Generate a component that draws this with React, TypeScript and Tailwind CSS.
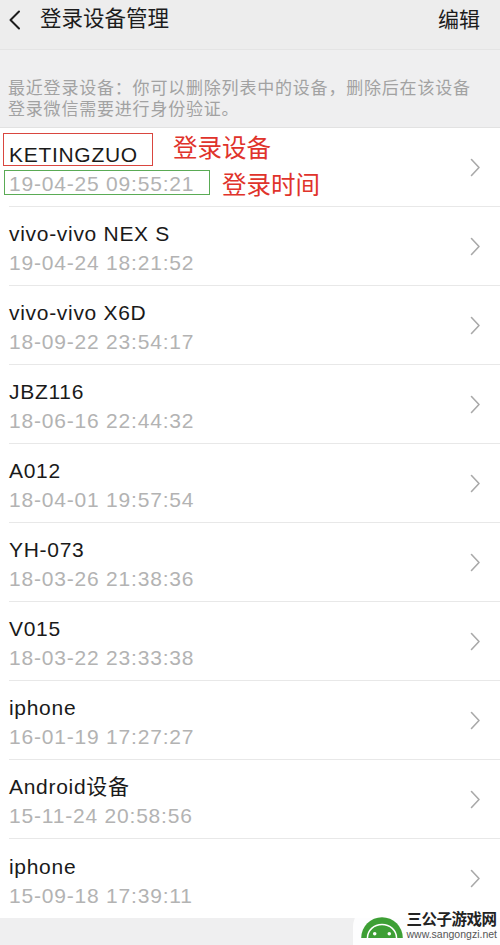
import React from 'react';

const DEVICES = [
  { name: 'KETINGZUO', time: '19-04-25 09:55:21' },
  { name: 'vivo-vivo NEX S', time: '19-04-24 18:21:52' },
  { name: 'vivo-vivo X6D', time: '18-09-22 23:54:17' },
  { name: 'JBZ116', time: '18-06-16 22:44:32' },
  { name: 'A012', time: '18-04-01 19:57:54' },
  { name: 'YH-073', time: '18-03-26 21:38:36' },
  { name: 'V015', time: '18-03-22 23:33:38' },
  { name: 'iphone', time: '16-01-19 17:27:27' },
  { name: 'Android设备', time: '15-11-24 20:58:56' },
  { name: 'iphone', time: '15-09-18 17:39:11' },
];

const FONT = "font-['Liberation_Sans','Noto_Sans_CJK_SC',sans-serif]";

const Chevron = () => (
  <svg width="11" height="19" viewBox="0 0 11 19" fill="none">
    <path d="M1.5 1.5 L9 9.5 L1.5 17.5" stroke="#a9a9a9" strokeWidth="1.6" strokeLinecap="round" strokeLinejoin="round" />
  </svg>
);

const Logo = () => (
  <svg width="42" height="26" viewBox="0 0 40 25">
    <path d="M0 24 A20 20 0 0 1 40 24 Z" fill="#3d9f35" />
    <path d="M6 24 A14 13 0 0 1 34 24" stroke="#fff" strokeWidth="1.4" fill="none" />
    <circle cx="13" cy="20" r="1.7" fill="#fff" />
    <circle cx="27" cy="20" r="1.7" fill="#fff" />
  </svg>
);

export default function App() {
  return (
    <div className={`relative w-[500px] h-[945px] overflow-hidden bg-[#efeff0] ${FONT}`}>
      {/* header */}
      <div className="flex items-center h-[50px] bg-[#ededed] border-b border-[#e4e4e4] pl-[8px] pr-[20px]">
        <svg width="14" height="20" viewBox="0 0 14 20" fill="none" className="mb-[10px]">
          <path d="M11 1.5 L2.5 10 L11 18.5" stroke="#1c1c1c" strokeWidth="2" strokeLinecap="round" strokeLinejoin="round" />
        </svg>
        <span className="ml-[18px] mb-[10px] text-[21.5px] text-[#1c1c1c] leading-none">登录设备管理</span>
        <span className="ml-auto mb-[10px] text-[21px] text-[#1c1c1c] leading-none">编辑</span>
      </div>

      {/* description */}
      <div className="pl-[8px] pr-[20px] pt-[28px] pb-[7px] text-[17px] leading-[21px] tracking-[0.8px] text-[#a2a2a2]">
        最近登录设备：你可以删除列表中的设备，删除后在该设备登录微信需要进行身份验证。
      </div>

      {/* device list */}
      <div className="relative bg-white border-t border-[#e2e2e2]">
        {DEVICES.map((d, i) => (
          <div key={i} className="flex items-center h-[79px] pl-[9px]">
            <div className={`flex-1 flex items-center h-full pr-[19px] ${i < DEVICES.length - 1 ? 'border-b border-[#e8e8e8]' : ''}`}>
              <div className="flex-1 pt-[5px]">
                <div className="text-[21px] leading-[29px] tracking-[0.7px] text-[#1a1a1a]">{d.name}</div>
                <div className="text-[21px] leading-[30px] tracking-[0.8px] text-[#b3b3b3]">{d.time}</div>
              </div>
              <Chevron />
            </div>
          </div>
        ))}

        {/* annotations */}
        <div className="absolute left-[3px] top-[5px] w-[150px] h-[33px] border-[1.5px] border-[#d9463f]" />
        <div className="absolute left-[4px] top-[42px] w-[206px] h-[25px] border-[1.5px] border-[#5aab55]" />
        <div className="absolute left-[173px] top-[6px] text-[24.5px] leading-[30px] text-[#e0332b]">登录设备</div>
        <div className="absolute left-[222px] top-[43px] text-[24.5px] leading-[30px] text-[#e0332b]">登录时间</div>
      </div>

      {/* watermark */}
      <div className="absolute right-0 bottom-0 flex items-center gap-[4px] pl-[8px] pr-[3px] pt-[6px] pb-[5px] bg-white/90 rounded-tl-[22px]">
        <Logo />
        <div className="flex flex-col items-start">
          <span className="text-[15.5px] leading-[17px] font-bold tracking-[-0.5px] text-[#222]">三公子游戏网</span>
          <span className="text-[10.5px] leading-[12px] text-[#555]">www.sangongzi.net</span>
        </div>
      </div>
    </div>
  );
}
